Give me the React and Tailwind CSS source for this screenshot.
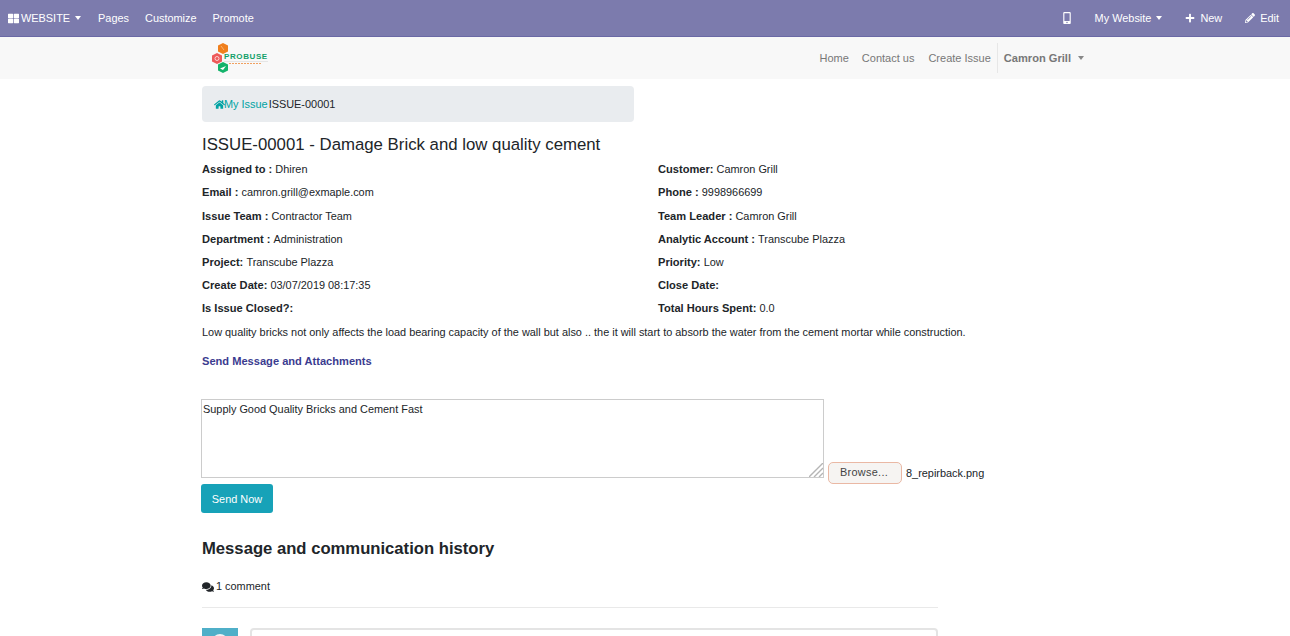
import React from 'react';
import { FaThLarge, FaHome, FaComments, FaMobileAlt, FaPlus, FaPencilAlt } from 'react-icons/fa';

const rows = [
    ['Assigned to : ', 'Dhiren', 'Customer: ', 'Camron Grill'],
    ['Email : ', 'camron.grill@exmaple.com', 'Phone : ', '9998966699'],
    ['Issue Team : ', 'Contractor Team', 'Team Leader : ', 'Camron Grill'],
    ['Department : ', 'Administration', 'Analytic Account : ', 'Transcube Plazza'],
    ['Project: ', 'Transcube Plazza', 'Priority: ', 'Low'],
    ['Create Date: ', '03/07/2019 08:17:35', 'Close Date: ', ''],
    ['Is Issue Closed?: ', '', 'Total Hours Spent: ', '0.0'],
];

const Caret = ({ className }) => (
    <span className={`inline-block w-0 h-0 border-x-[3px] border-x-transparent border-t-[4px] ${className}`} />
);

const Logo = () => (
    <div className="relative w-[58px] h-[32px]">
        <svg width="58" height="32" viewBox="0 0 58 32">
            <polygon points="12,1 17,3.5 17,9.5 12,12 7,9.5 7,3.5" fill="#f07f1d" />
            <polygon points="6,11 11,13.5 11,19.5 6,22 1,19.5 1,13.5" fill="#ee5a5a" />
            <polygon points="12,20 17,22.5 17,28.5 12,31 7,28.5 7,22.5" fill="#14b36b" />
            <circle cx="6" cy="16.5" r="2" fill="none" stroke="#fff" strokeWidth="0.7" />
            <path d="M9 26.5 L15 24 L12 28 Z" fill="#fff" />
            <path d="M10 4 L13 8" stroke="#f9c184" strokeWidth="0.8" />
            <line x1="13" y1="19.5" x2="57" y2="19.5" stroke="#dddddd" strokeWidth="0.7" />
            <line x1="18" y1="21.5" x2="51" y2="21.5" stroke="#f0a060" strokeWidth="1" strokeDasharray="2 1" />
        </svg>
        <span className="absolute left-[13px] top-[10px] text-[8px] leading-[9px] font-bold tracking-[0.6px] text-[#12a06a]">PROBUSE</span>
    </div>
);

export default function App() {
    return (
        <div className="h-screen overflow-hidden bg-white text-[10.92px] text-[#212529] font-['Liberation_Sans',Arial,sans-serif]">
            {/* top bar */}
            <div className="h-[37px] bg-[#7c7bad] border-b border-[#6a69a5] flex items-center justify-between text-[10.92px] text-white">
                <div className="flex items-center">
                    <span className="flex items-center ml-2"><FaThLarge className="text-[11px] mr-[2px]" />WEBSITE<Caret className="border-t-white ml-[5px]" /></span>
                    <span className="ml-[17px]">Pages</span>
                    <span className="ml-4">Customize</span>
                    <span className="ml-4">Promote</span>
                </div>
                <div className="flex items-center mr-[11px]">
                    <FaMobileAlt className="text-[12px] mr-[22px]" />
                    <span className="flex items-center mr-[23px]">My Website<Caret className="border-t-white ml-[5px]" /></span>
                    <span className="flex items-center mr-[23px]"><FaPlus className="text-[10px] mr-[5px]" />New</span>
                    <span className="flex items-center"><FaPencilAlt className="text-[10px] mr-[5px]" />Edit</span>
                </div>
            </div>
            {/* site nav */}
            <div className="h-[42px] bg-[#f8f8f8] flex items-center justify-between pl-[211px] pr-[206px] text-[11px] text-[#777777]">
                <Logo />
                <div className="flex items-center">
                    <span className="mr-[13px]">Home</span>
                    <span className="mr-[14px]">Contact us</span>
                    <span className="mr-[6px]">Create Issue</span>
                    <span className="flex items-center h-[30px] border-l border-[#e7e7e7] pl-[6px] text-[11.1px] font-bold">Camron Grill<Caret className="border-t-[#888888] ml-[7px]" /></span>
                </div>
            </div>
            {/* content */}
            <div className="pl-[202px] pt-[7px]">
                <div className="w-[432px] h-[36px] bg-[#e9ecef] rounded flex items-center px-3">
                    <FaHome className="text-[11px] text-[#00a3a3]" />
                    <span className="text-[#00a3a3] -ml-px">My Issue</span>
                    <span className="ml-px">ISSUE-00001</span>
                </div>
                <h1 className="mt-[12px] text-[16.8px] leading-[21px] font-normal">ISSUE-00001 - Damage Brick and low quality cement</h1>
                <div className="mt-[3.2px] w-[912px] grid grid-cols-2">
                    {rows.map((r) => (
                        <React.Fragment key={r[0]}>
                            <div className="h-[23.2px] leading-[23px]"><b className="text-[11.1px]">{r[0]}</b>{r[1]}</div>
                            <div className="h-[23.2px] leading-[23px]"><b className="text-[11.1px]">{r[2]}</b>{r[3]}</div>
                        </React.Fragment>
                    ))}
                </div>
                <p className="mt-[0.8px] leading-[23px]">Low quality bricks not only affects the load bearing capacity of the wall but also .. the it will start to absorb the water from the cement mortar while construction.</p>
                <div className="mt-[6px] leading-[23px] text-[11.1px] font-bold text-[#3b3b8f]">Send Message and Attachments</div>
                <div className="mt-[26px] -ml-px flex items-end">
                    <div className="relative">
                        <textarea
                            className="block w-[623px] h-[79px] border border-[#cccccc] px-px py-0 text-[10.92px] leading-[18px] text-[#212529] outline-none resize-none"
                            defaultValue="Supply Good Quality Bricks and Cement Fast"
                        />
                        {/* drag handle */}
                        <svg className="absolute right-px bottom-px" width="14" height="14" viewBox="0 0 14 14">
                            <path d="M0 14L14 0M5 14L14 5M10 14L14 10" stroke="#b5b5b5" strokeWidth="1.4" />
                        </svg>
                    </div>
                    <span className="ml-[4px] w-[74px] h-[22px] -mb-[6px] pb-[2px] pr-[2px] flex items-center justify-center rounded-[5px] border-[1.5px] border-[#eab8a4] bg-[#f6f4f2] text-[#444444] text-[10.92px] tracking-[0.3px]">Browse...</span>
                    <span className="ml-[4px] -mb-[3px] leading-[15px]">8_repirback.png</span>
                </div>
                <div className="-ml-px mt-[6px] w-[72px] h-[29px] rounded-[3px] bg-[#17a2b8] text-white flex items-center justify-center">Send Now</div>
                <h2 className="mt-[25px] text-[16.65px] leading-[21px] font-bold">Message and communication history</h2>
                <div className="mt-[20px] flex items-center leading-[15px]"><FaComments className="text-[12px] mr-[2px]" />1 comment</div>
                <div className="mt-[13px] w-[736px] border-t border-[#e9e9e9]" />
                <div className="mt-[20px] flex">
                    <div className="w-[36px] h-[36px] bg-[#4fafc8] flex justify-center pt-[6px]"><div className="w-[16px] h-[16px] rounded-full bg-[#eef2f4]" /></div>
                    <div className="ml-[12px] w-[688px] h-[60px] border-2 border-[#e4e4e4] rounded" />
                </div>
            </div>
        </div>
    );
}
